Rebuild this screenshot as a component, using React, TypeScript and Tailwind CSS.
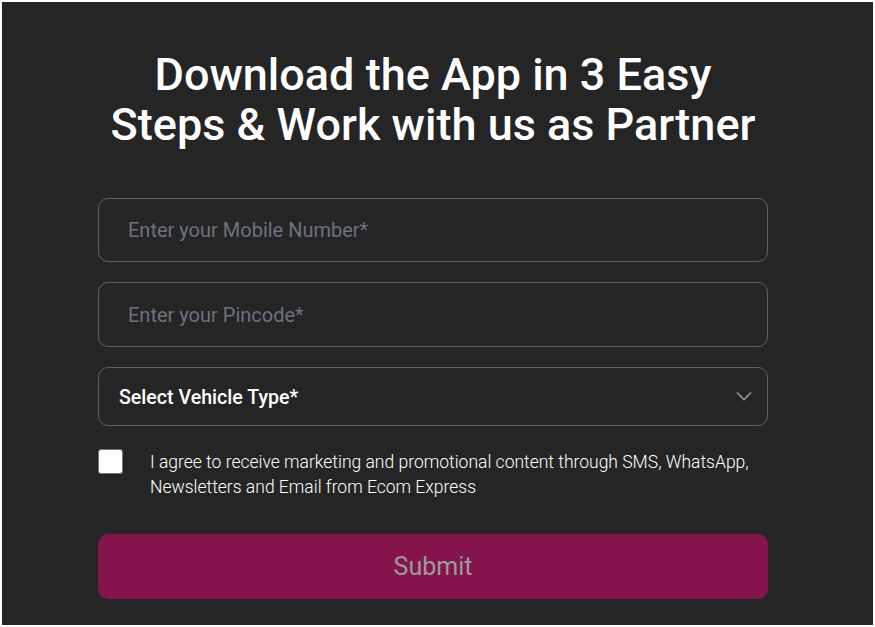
export default function App() {
  return (
    <div className="min-h-[627px] w-[875px] bg-white p-[2px]">
      <div
        className="h-[623px] bg-[#252525] pt-[48px] text-white"
        style={{ fontFamily: 'Roboto, "Liberation Sans", sans-serif' }}
      >
        <h1 className="ml-[96px] w-[670px] text-center text-[45px] font-medium leading-[50px]">
          Download the App in 3 Easy
          <br />
          Steps &amp; Work with us as Partner
        </h1>
        <form className="ml-[96px] mt-[48px] flex w-[670px] flex-col">
          <input
            type="text"
            placeholder="Enter your Mobile Number*"
            className="h-[64px] rounded-[10px] border border-[#5b6068] bg-transparent px-[29px] text-[20px] text-white outline-none placeholder:text-[#6b7280]"
          />
          <input
            type="text"
            placeholder="Enter your Pincode*"
            className="mt-[20px] h-[65px] rounded-[10px] border border-[#5b6068] bg-transparent px-[29px] text-[20px] text-white outline-none placeholder:text-[#6b7280]"
          />
          <div className="mt-[20px] flex h-[59px] items-center justify-between rounded-[10px] border border-[#5b6068] pl-[20px] pr-[15px]">
            <span className="mt-[3px] text-[19.6px] font-medium">Select Vehicle Type*</span>
            <svg width="16" height="10" viewBox="0 0 16 10" fill="none" className="mt-[-2px]">
              <polyline points="1,1.5 8,8.5 15,1.5" stroke="#9a9a9a" strokeWidth="1.6" />
            </svg>
          </div>
          <label className="mt-[23px] flex items-start gap-[27px]">
            <span className="h-[25px] w-[25px] shrink-0 rounded-[3px] border border-[#767676] bg-white" />
            <span className="mt-[1px] text-[17.5px] font-light leading-[25px] text-white">
              I agree to receive marketing and promotional content through SMS, WhatsApp,
              <br />
              Newsletters and Email from Ecom Express
            </span>
          </label>
          <button
            type="button"
            className="mt-[34px] h-[65px] rounded-[10px] bg-[#85144c] text-[25px] text-[#9b9b9b]"
          >
            Submit
          </button>
        </form>
      </div>
    </div>
  );
}
